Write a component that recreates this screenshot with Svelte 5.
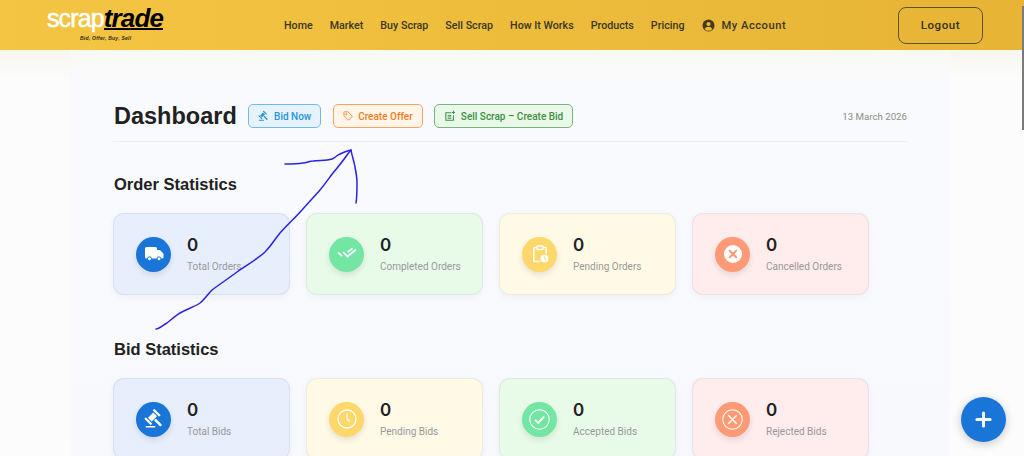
<script>
  const nav = ['Home', 'Market', 'Buy Scrap', 'Sell Scrap', 'How It Works', 'Products', 'Pricing'];
  const orderStats = [
    { label: 'Total Orders', tone: 'blue', icon: 'truck' },
    { label: 'Completed Orders', tone: 'green', icon: 'doublecheck' },
    { label: 'Pending Orders', tone: 'yellow', icon: 'clipboard' },
    { label: 'Cancelled Orders', tone: 'red', icon: 'xfill' }
  ];
  const bidStats = [
    { label: 'Total Bids', tone: 'blue', icon: 'gavel' },
    { label: 'Pending Bids', tone: 'yellow', icon: 'clock' },
    { label: 'Accepted Bids', tone: 'green', icon: 'check' },
    { label: 'Rejected Bids', tone: 'red', icon: 'xring' }
  ];
  const sections = [
    { title: 'Order Statistics', items: orderStats },
    { title: 'Bid Statistics', items: bidStats }
  ];
</script>

{#snippet gavel(size)}
  <svg width={size} height={size} viewBox="0 0 20 20" fill="currentColor" aria-hidden="true">
    <g transform="translate(8.5 8) rotate(45)">
      <rect x="-4.5" y="-7" width="9" height="2.2" rx=".6" />
      <rect x="-4.5" y="4.8" width="9" height="2.2" rx=".6" />
      <rect x="-2.6" y="-3.8" width="5.2" height="7.6" />
      <rect x="3.4" y="-1.3" width="9" height="2.6" rx="1" />
    </g>
    <rect x="1.5" y="17" width="10" height="1.6" rx=".8" />
  </svg>
{/snippet}

{#snippet statIcon(name)}
  {#if name === 'truck'}
    <svg width="20" height="20" viewBox="0 0 20 20" fill="currentColor"><path d="M1 4.5A1.5 1.5 0 0 1 2.5 3h9A1.5 1.5 0 0 1 13 4.5V6h2.7a1 1 0 0 1 .8.4l2.8 3.2a1 1 0 0 1 .2.6v3.3a1 1 0 0 1-1 1H2.5A1.5 1.5 0 0 1 1 13z" /><circle cx="5.5" cy="14.8" r="2" stroke="#1976d8" stroke-width="1" /><circle cx="15" cy="14.8" r="2" stroke="#1976d8" stroke-width="1" /></svg>
  {:else if name === 'doublecheck'}
    <svg width="20" height="20" viewBox="0 0 20 20" fill="none" stroke="currentColor" stroke-width="1.7"><path d="M1 8.5l4 3.5M6 8l4.500 4.500L19 5.500M10.500 8L15.500 4.500" /></svg>
  {:else if name === 'clipboard'}
    <svg width="20" height="20" viewBox="0 0 20 20" fill="none" stroke="currentColor" stroke-width="1.5"><path d="M7 3.5H4.8a1 1 0 0 0-1 1v12a1 1 0 0 0 1 1h5M13 3.5h2.200a1 1 0 0 1 1 1v5" /><rect x="7" y="2" width="6" height="3.4" rx=".8" /><circle cx="14.5" cy="14.5" r="4" fill="currentColor" stroke="none" /><path d="M14.5 12.5v2.300l1.500 1" stroke="#ffd76a" stroke-width="1" /></svg>
  {:else if name === 'xfill'}
    <svg width="20" height="20" viewBox="0 0 20 20"><circle cx="10" cy="10" r="9" fill="currentColor" /><path d="M6.8 6.8l6.400 6.400M13.200 6.800l-6.400 6.400" stroke="#ff9a76" stroke-width="2" stroke-linecap="round" /></svg>
  {:else if name === 'gavel'}
    {@render gavel(20)}
  {:else if name === 'clock'}
    <svg width="20" height="20" viewBox="0 0 20 20" fill="none" stroke="currentColor" stroke-width="1.3"><circle cx="10" cy="10" r="9" /><path d="M10 4.8V10l3 2.800" /></svg>
  {:else if name === 'check'}
    <svg width="21" height="21" viewBox="0 0 20 20" fill="none" stroke="currentColor" stroke-width="1"><circle cx="10" cy="10" r="9.3" /><path d="M5.8 10.3l3 3 5.500-6" stroke-width="1.8" /></svg>
  {:else}
    <svg width="21" height="21" viewBox="0 0 20 20" fill="none" stroke="currentColor" stroke-width="1"><circle cx="10" cy="10" r="9.3" /><path d="M6 6l8 8M14 6l-8 8" stroke-width="1.3" /></svg>
  {/if}
{/snippet}

<div class="page">
  <header class="topbar">
    <div class="logo">
      <div class="wordmark"><span class="scrap">scrap</span><span class="trade">trade</span></div>
      <div class="tagline">Bid, Offer, Buy, Sell</div>
    </div>
    <nav class="nav">
      {#each nav as item}
        <span>{item}</span>
      {/each}
      <span class="account">
        <svg width="13" height="13" viewBox="0 0 13 13"><circle cx="6.5" cy="6.5" r="6" fill="#3f3a20" /><circle cx="6.5" cy="5" r="2.1" fill="#e9b938" /><path d="M2.6 10a4.5 4.5 0 0 1 7.8 0 5 5 0 0 1-7.8 0z" fill="#e9b938" /></svg>
        My Account
      </span>
    </nav>
    <button class="logout">Logout</button>
  </header>

  <main class="panel">
    <div class="head">
      <h1>Dashboard</h1>
      <button class="action a-blue">{@render gavel(14)} Bid Now</button>
      <button class="action a-orange">
        <svg width="14" height="14" viewBox="0 0 16 16" fill="none" stroke="currentColor" stroke-width="1.3"><path d="M1.500 2.500a1 1 0 0 1 1-1h5l7 7-6 6-7-7z" /><circle cx="5" cy="5" r=".9" /></svg>
        Create Offer
      </button>
      <button class="action a-green">
        <svg width="14" height="14" viewBox="0 0 16 16" fill="none" stroke="currentColor" stroke-width="1.4"><path d="M10 3.500H2.500V14h10.500V7" /><path d="M13 .8v4.400M10.800 3h4.400" /><path d="M5 7.200h5M5 9.200h5M5 11.200h5" stroke-width="1.2" /></svg>
        Sell Scrap – Create Bid
      </button>
      <span class="date">13 March 2026</span>
    </div>

    {#each sections as section}
      <section>
        <h2>{section.title}</h2>
        <div class="cards">
          {#each section.items as stat}
            <div class="card {stat.tone}">
              <div class="badge">{@render statIcon(stat.icon)}</div>
              <div>
                <div class="num">0</div>
                <div class="label">{stat.label}</div>
              </div>
            </div>
          {/each}
        </div>
      </section>
    {/each}
  </main>

  <svg class="ink" width="1024" height="456" viewBox="0 0 1024 456" fill="none" stroke="#2a22e6" stroke-width="1.5" stroke-linecap="round" stroke-linejoin="round" aria-hidden="true">
    <path d="M156 329C160 329 163 325 167 323C171 320 175 316 180 313C187 309 194 307 200 303C205 299 208 294 212 290C220 284 229 278 237 272C247 265 256 260 265 252C271 246 275 239 280 233C287 225 295 218 302 210C308 203 314 197 320 190C325 184 329 178 333 173C338 167 343 161 347 155L351 150" />
    <path d="M285 164C291 164 297 164 303 163C307 163 309 161 313 161C319 160 326 161 332 159C335 158 337 155 340 154C344 152 347 151 351 150C352 156 354 161 355 167C356 172 357 177 357 183C357 190 357 197 356 203" />
  </svg>

  <button class="fab" aria-label="Add">
    <svg width="17" height="17" viewBox="0 0 18 18" fill="none" stroke="#fff" stroke-width="3.2" stroke-linecap="round"><path d="M9 2v14M2 9h14" /></svg>
  </button>
  <div class="scroll"></div>
</div>

<style>
  :global(body) {
    margin: 0;
    overflow: hidden;
    background: #fcfcfc;
  }
  .page {
    position: relative;
    width: 1024px;
    height: 456px;
    overflow: hidden;
    font-family: "Liberation Sans", Arial, sans-serif;
    color: #212121;
    background: linear-gradient(#f9f6ee 50px, #fcfcfc 80px);
  }
  .topbar {
    height: 50px;
    box-sizing: border-box;
    display: flex;
    align-items: center;
    background: linear-gradient(90deg, #f4c542, #e7b436);
    padding: 0 41px 0 47px;
  }
  .logo {
    width: 237px;
    flex: none;
    margin-top: -3px;
  }
  .wordmark {
    line-height: 24px;
    white-space: nowrap;
  }
  .scrap {
    color: #fff;
    font-weight: 400;
    font-size: 25px;
    letter-spacing: -0.9px;
    -webkit-text-stroke: 0.5px #fff;
  }
  .trade {
    color: #000;
    font-weight: 700;
    font-style: italic;
    font-size: 26px;
    letter-spacing: -0.8px;
    border-bottom: 2px solid #000;
    line-height: 20px;
    display: inline-block;
  }
  .tagline {
    font-size: 5px;
    font-weight: 700;
    font-style: italic;
    letter-spacing: 0.25px;
    color: #2b2b1a;
    margin: 1px 0 0 33px;
    line-height: 6px;
  }
  .nav {
    display: flex;
    align-items: center;
    gap: 17px;
    font-family: Roboto, sans-serif;
    font-size: 10.7px;
    font-weight: 500;
    color: #3a3620;
    flex: 1;
    white-space: nowrap;
  }
  .account {
    display: flex;
    align-items: center;
    gap: 6px;
    letter-spacing: 0.5px;
    font-size: 11.2px;
    margin-left: 1px;
  }
  .logout {
    width: 85px;
    height: 37px;
    box-sizing: border-box;
    border: 1px solid #5c5428;
    border-radius: 8px;
    background: transparent;
    font-family: Roboto, sans-serif;
    font-size: 11.5px;
    font-weight: 500;
    letter-spacing: 0.6px;
    color: #33301c;
    padding: 0;
  }
  .panel {
    width: 880px;
    margin-left: 70px;
    box-sizing: border-box;
    padding: 50px 43px 0;
    background: linear-gradient(#f9f8f3, #f9fafd 30px, #f7f9fc);
    height: 406px;
  }
  .head {
    display: flex;
    align-items: center;
    height: 32px;
    padding-bottom: 9px;
    box-sizing: content-box;
    border-bottom: 1px solid #eceef0;
    gap: 11.5px;
  }
  h1 {
    margin: 0;
    padding-left: 1px;
    font-size: 23.5px;
    line-height: 32px;
    font-weight: 700;
    color: #212121;
  }
  .action {
    height: 24px;
    box-sizing: border-box;
    display: inline-flex;
    align-items: center;
    gap: 5px;
    border-radius: 5px;
    font-family: Roboto, sans-serif;
    font-size: 10px;
    font-weight: 500;
    padding: 0 9px;
    border: 1px solid;
    white-space: nowrap;
  }
  .a-blue { color: #2196d8; background: #e6f2fd; border-color: #72b9e8; width: 73px; }
  .a-orange { color: #f57c1f; background: #fff5e8; border-color: #f5a35f; width: 90px; }
  .a-green { color: #3f8e46; background: #e8f9e8; border-color: #7cb384; width: 139px; }
  .date {
    margin-left: auto;
    font-family: Roboto, sans-serif;
    font-size: 9.7px;
    color: #8a8a8a;
  }
  section h2 {
    margin: 0;
    padding-left: 1px;
    font-size: 16.5px;
    line-height: 22px;
    font-weight: 700;
    color: #212121;
    padding-top: 31px;
  }
  section + section h2 {
    padding-top: 43px;
  }
  .cards {
    display: flex;
    gap: 16px;
    margin-top: 18px;
  }
  .card {
    width: 177px;
    height: 82px;
    box-sizing: border-box;
    border-radius: 11px;
    border: 1px solid rgba(90, 110, 170, 0.1);
    display: flex;
    align-items: center;
    gap: 16px;
    padding-left: 22px;
    box-shadow: 0 2px 6px rgba(60, 70, 110, 0.05);
  }
  .blue { background: #e7eefc; }
  .green { background: #e8fbe8; }
  .yellow { background: #fffae6; }
  .red { background: #ffecec; }
  .badge {
    width: 35px;
    height: 35px;
    border-radius: 50%;
    display: flex;
    align-items: center;
    justify-content: center;
    color: #fff;
    flex: none;
    box-shadow: 0 3px 6px rgba(0, 0, 0, 0.1);
  }
  .blue .badge { background: #1976d8; }
  .green .badge { background: #73e6a3; }
  .yellow .badge { background: #ffd76a; }
  .red .badge { background: #ff9a76; }
  .num {
    font-family: Inter, sans-serif;
    font-size: 17px;
    line-height: 20px;
    font-weight: 600;
    color: #212121;
  }
  .label {
    font-family: Roboto, sans-serif;
    font-size: 10px;
    line-height: 13px;
    margin-top: 5px;
    color: #98999b;
    white-space: nowrap;
  }
  .ink {
    position: absolute;
    inset: 0;
    pointer-events: none;
  }
  .fab {
    position: absolute;
    left: 961px;
    top: 397px;
    width: 45px;
    height: 45px;
    border: 0;
    border-radius: 50%;
    padding: 0;
    background: #1976d8;
    box-shadow: 0 2px 10px rgba(0, 0, 0, 0.22);
    display: flex;
    align-items: center;
    justify-content: center;
  }
  .scroll {
    position: absolute;
    right: 0;
    top: 6px;
    width: 2px;
    height: 124px;
    background: #7b7b7b;
  }
</style>
